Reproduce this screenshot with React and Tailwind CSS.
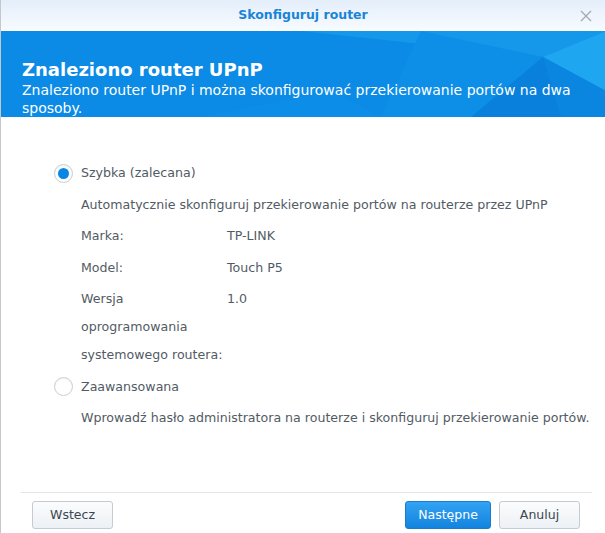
import React, { useState } from "react";

const Radio = ({ checked, onClick }) => (
    <button
        type="button"
        onClick={onClick}
        className="w-[19px] h-[19px] shrink-0 rounded-full border border-[#c9cfd6] bg-white flex items-center justify-center shadow-[inset_0_1px_2px_rgba(0,0,0,0.06)]"
    >
        {checked && <span className="w-[11px] h-[11px] rounded-full bg-[#0a86e4]" />}
    </button>
);

const Button = ({ children, primary }) => (
    <button
        type="button"
        className={`h-[28px] rounded-[3px] border text-[12.5px] ${primary
            ? "w-[86px] border-[#1a7ccc] bg-gradient-to-b from-[#32a2f4] to-[#1184de] text-white"
            : "w-[81px] border-[#c5cbd2] bg-gradient-to-b from-[#fbfcfd] to-[#edf1f5] text-[#3c4650]"
            }`}
    >
        {children}
    </button>
);

export default function App() {
    const [mode, setMode] = useState("quick");

    // long label keeps its line breaks
    const rows = [
        ["Marka:", "TP-LINK"],
        ["Model:", "Touch P5"],
        ["Wersja\noprogramowania\nsystemowego routera:", "1.0"],
    ];

    return (
        <div className="w-[605px] h-[533px] bg-white border-l border-[#c4c8cc] flex flex-col font-['DejaVu_Sans',sans-serif] text-[12.6px] text-[#525b64] overflow-hidden">
            {/* Title bar */}
            <div className="relative h-[31px] shrink-0 bg-gradient-to-b from-[#e4eefa] to-[#f7fbff] flex items-center justify-center border-b border-white">
                <span className="text-[12.5px] font-bold text-[#1a84d6]">Skonfiguruj router</span>
                <svg className="absolute right-[13px] top-[10px]" width="12" height="12" viewBox="0 0 12 12">
                    <path d="M1 1L11 11M11 1L1 11" stroke="#a3a9af" strokeWidth="1.3" />
                </svg>
            </div>

            {/* Banner */}
            <div className="relative h-[86px] shrink-0 bg-[#0b8be6] overflow-hidden">
                <svg className="absolute inset-0" width="605" height="86" viewBox="0 0 605 86">
                    <polygon points="300,0 605,0 542,26" fill="#1598ea" />
                    <polygon points="420,0 542,26 470,86 380,86" fill="#0d8fe8" />
                    <polygon points="542,26 605,0 605,60" fill="#1ea6f0" />
                    <polygon points="542,26 605,60 605,86 560,86" fill="#0a86e0" />
                    <polygon points="542,26 560,86 470,86" fill="#0980db" />
                    <polygon points="200,86 380,86 330,60" fill="#0c8de7" />
                </svg>
                <div className="relative pt-[27px] pl-[21px] text-white">
                    <div className="text-[18px] leading-[23px] font-bold">Znaleziono router UPnP</div>
                    <div className="text-[14px] leading-[18px] w-[560px]">
                        Znaleziono router UPnP i można skonfigurować przekierowanie portów na dwa sposoby.
                    </div>
                </div>
            </div>

            {/* Options */}
            <div className="flex-1 pt-[42px] pl-[53px] flex flex-col gap-[3.5px] leading-[28px]">
                <div className="flex items-center gap-[8px]">
                    <Radio checked={mode === "quick"} onClick={() => setMode("quick")} />
                    <span>Szybka (zalecana)</span>
                </div>
                <div className="pl-[27px]">
                    Automatycznie skonfiguruj przekierowanie portów na routerze przez UPnP
                </div>
                {rows.map(([label, value]) => (
                    <div key={label} className="pl-[27px] flex">
                        <span className="w-[146px] whitespace-pre-line">{label}</span>
                        <span>{value}</span>
                    </div>
                ))}
                <div className="flex items-center gap-[8px]">
                    <Radio checked={mode === "advanced"} onClick={() => setMode("advanced")} />
                    <span>Zaawansowana</span>
                </div>
                <div className="pl-[27px]">
                    Wprowadź hasło administratora na routerze i skonfiguruj przekierowanie portów.
                </div>
            </div>

            {/* Footer */}
            <div className="ml-[20px] mr-[13px] border-t border-[#e2e5e9] pt-[8px] pb-[4px] pl-[11px] flex items-center">
                <Button>Wstecz</Button>
                <div className="flex-1" />
                <div className="flex gap-[8px] pr-[12px]">
                    <Button primary>Następne</Button>
                    <Button>Anuluj</Button>
                </div>
            </div>
        </div>
    );
}
